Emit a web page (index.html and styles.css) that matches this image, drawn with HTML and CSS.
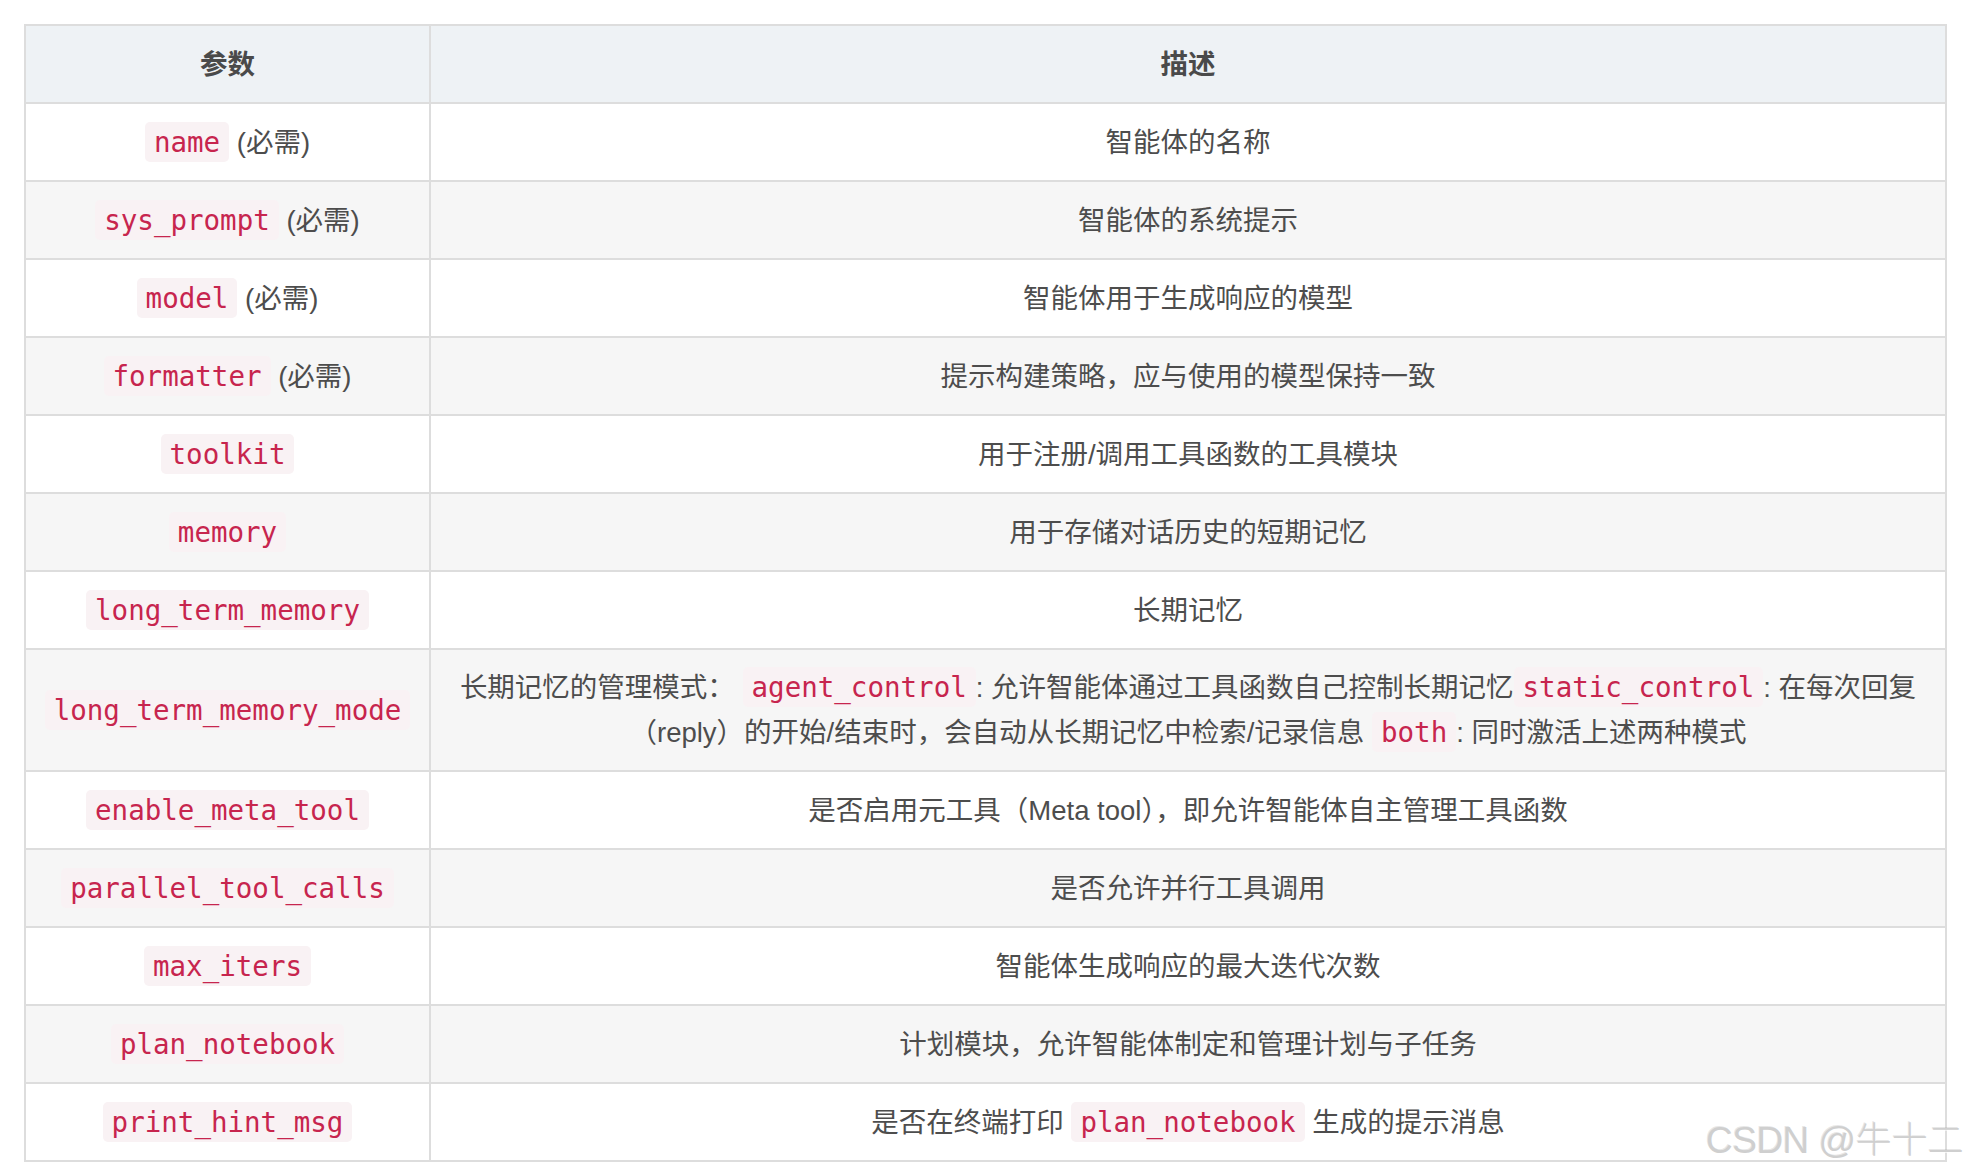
FILE: index.html
```html
<!DOCTYPE html>
<html lang="zh-CN">
<head>
<meta charset="utf-8">
<title>参数表</title>
<link rel="stylesheet" href="styles.css">
</head>
<body>
<div class="wrap">
  <table class="params">
    <colgroup>
      <col class="col-name">
      <col class="col-desc">
    </colgroup>
    <thead>
      <tr><th>参数</th><th>描述</th></tr>
    </thead>
    <tbody>
      <tr><td><code>name</code> (必需)</td><td>智能体的名称</td></tr>
      <tr><td><code>sys_prompt</code> (必需)</td><td>智能体的系统提示</td></tr>
      <tr><td><code>model</code> (必需)</td><td>智能体用于生成响应的模型</td></tr>
      <tr><td><code>formatter</code> (必需)</td><td>提示构建策略，应与使用的模型保持一致</td></tr>
      <tr><td><code>toolkit</code></td><td>用于注册/调用工具函数的工具模块</td></tr>
      <tr><td><code>memory</code></td><td>用于存储对话历史的短期记忆</td></tr>
      <tr><td><code>long_term_memory</code></td><td>长期记忆</td></tr>
      <tr class="tall"><td><code>long_term_memory_mode</code></td><td>长期记忆的管理模式： <code>agent_control</code>: 允许智能体通过工具函数自己控制长期记忆<code>static_control</code>: 在每次回复<br>（reply）的开始/结束时，会自动从长期记忆中检索/记录信息 <code>both</code>: 同时激活上述两种模式</td></tr>
      <tr><td><code>enable_meta_tool</code></td><td>是否启用元工具（Meta tool），即允许智能体自主管理工具函数</td></tr>
      <tr><td><code>parallel_tool_calls</code></td><td>是否允许并行工具调用</td></tr>
      <tr><td><code>max_iters</code></td><td>智能体生成响应的最大迭代次数</td></tr>
      <tr><td><code>plan_notebook</code></td><td>计划模块，允许智能体制定和管理计划与子任务</td></tr>
      <tr><td><code>print_hint_msg</code></td><td>是否在终端打印 <code>plan_notebook</code> 生成的提示消息</td></tr>
    </tbody>
  </table>
</div>
<div class="watermark">CSDN @<span class="wm-cjk">牛十二</span></div>
</body>
</html>
```
FILE: styles.css
```css
html, body {
  margin: 0;
  padding: 0;
  background: #ffffff;
}

body {
  position: relative;
  font-family: "Liberation Sans", "Noto Sans CJK SC", sans-serif;
  color: #4d4d4d;
}

.wrap {
  padding: 24px 0 0 24px;
}

.params {
  border-collapse: collapse;
  table-layout: fixed;
  width: 1923px;
  font-size: 27.5px;
  line-height: 45px;
}

.col-name {
  width: 405px;
}

.params th,
.params td {
  border: 2px solid #dddddd;
  text-align: center;
  padding: 16px 18px 15px;
  white-space: nowrap;
}

.params .tall td {
  padding-top: 15px;
  padding-bottom: 15px;
}

.params thead th {
  background: #eef2f5;
  font-weight: bold;
  color: #4a4a4a;
}

.params tbody tr:nth-child(even) td {
  background: #f6f6f6;
}

.params code {
  font-family: "DejaVu Sans Mono", monospace;
  font-size: 27.5px;
  line-height: 30px;
  color: #c7254e;
  background: #f9f2f4;
  padding: 4px 9px;
  border-radius: 5px;
}

.watermark {
  position: absolute;
  left: 1706px;
  top: 1116px;
  font-family: "Liberation Sans", "Noto Sans CJK SC", sans-serif;
  font-size: 37px;
  line-height: 42px;
  letter-spacing: -0.5px;
  color: #cfcfcf;
  text-shadow: 1px 1px 0 rgba(255, 255, 255, 0.7), -1px -1px 0 rgba(160, 160, 160, 0.25);
  white-space: nowrap;
}

.wm-cjk {
  font-family: "Noto Sans CJK SC", sans-serif;
  font-size: 36px;
  font-weight: 300;
  letter-spacing: 0;
}
```
